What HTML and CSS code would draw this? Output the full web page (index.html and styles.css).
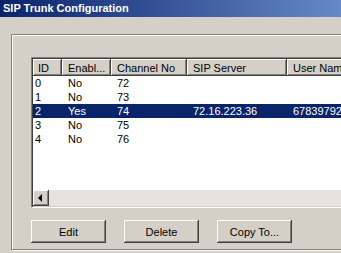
FILE: index.html
```html
<!DOCTYPE html>
<html lang="en">
<head>
  <meta charset="UTF-8" />
  <title>SIP Trunk Configuration</title>
  <link rel="stylesheet" href="styles.css">
</head>
<body>
  <div class="window">
    <div class="titlebar">SIP Trunk Configuration</div>
    <div class="client">
      <div class="group">
        <div class="listview">
          <table class="grid">
            <colgroup>
              <col class="c-id"><col class="c-en"><col class="c-ch"><col class="c-srv"><col class="c-user">
            </colgroup>
            <thead>
              <tr>
                <th class="first">ID</th>
                <th>Enabl...</th>
                <th>Channel No</th>
                <th>SIP Server</th>
                <th>User Name</th>
              </tr>
            </thead>
            <tbody>
              <tr><td>0</td><td>No</td><td>72</td><td></td><td></td></tr>
              <tr><td>1</td><td>No</td><td>73</td><td></td><td></td></tr>
              <tr class="selected"><td>2</td><td>Yes</td><td>74</td><td>72.16.223.36</td><td>6783979245</td></tr>
              <tr><td>3</td><td>No</td><td>75</td><td></td><td></td></tr>
              <tr><td>4</td><td>No</td><td>76</td><td></td><td></td></tr>
            </tbody>
          </table>
          <div class="hscroll">
            <div class="arrow"><span class="tri"></span></div>
            <div class="track"></div>
          </div>
        </div>
        <div class="buttons">
          <button type="button">Edit</button>
          <button type="button">Delete</button>
          <button type="button">Copy To...</button>
        </div>
      </div>
    </div>
  </div>
</body>
</html>
```

FILE: styles.css
```css
body {
  margin: 0;
  background: #d4d0c8;
  font-family: "Liberation Sans", Arial, sans-serif;
  font-size: 11px;
  color: #000;
  overflow: hidden;
}
.window {
  width: 460px;
  height: 253px;
}
.titlebar {
  height: 17px;
  line-height: 17px;
  padding-left: 3px;
  color: #fff;
  font-weight: bold;
  background: linear-gradient(to right, #0a246a 0, #6688c8 341px, #7f9fd6 460px);
}
.client {
  padding: 17px 0 0 11px;
}
.group {
  width: 430px;
  border: 1px solid #808080;
  box-shadow: inset 1px 1px #fff, 1px 1px #fff;
  padding: 22px 0 6px 19px;
}
.listview {
  width: 400px;
  background: #fff;
  border-top: 1px solid #808080;
  border-left: 1px solid #808080;
  border-bottom: 1px solid #fff;
  border-right: 1px solid #fff;
  padding: 1px;
  box-shadow: inset 1px 1px #404040, inset -1px -1px #d4d0c8;
}
.grid {
  width: 396px;
  border-collapse: collapse;
  table-layout: fixed;
  height: 131px;
}
.c-id { width: 29px; }
.c-en { width: 49px; }
.c-ch { width: 76px; }
.c-srv { width: 100px; }
.c-user { width: 142px; }
.grid th {
  height: 17px;
  padding: 0 0 0 6px;
  text-align: left;
  font-weight: normal;
  background: #d4d0c8;
  box-shadow: inset -1px -1px #404040, inset 1px 1px #fff, inset -2px -2px #808080;
  white-space: nowrap;
  overflow: hidden;
}
.grid th.first {
  padding-left: 5px;
}
.grid td {
  height: 14px;
  line-height: 14px;
  padding: 0 0 0 6px;
  white-space: nowrap;
  overflow: hidden;
  vertical-align: top;
}
.grid td:first-child {
  padding-left: 2px;
}
.grid tbody tr:last-child td {
  height: 58px;
}
.grid tr.selected td {
  background: #0a246a;
  color: #fff;
}
.hscroll {
  display: flex;
  height: 16px;
}
.arrow {
  width: 16px;
  height: 16px;
  box-sizing: border-box;
  background: #d4d0c8;
  box-shadow: inset -1px -1px #404040, inset 1px 1px #fff, inset -2px -2px #808080;
  display: flex;
  align-items: center;
  justify-content: center;
}
.tri {
  width: 0;
  height: 0;
  border-top: 4px solid transparent;
  border-bottom: 4px solid transparent;
  border-right: 4px solid #000;
  margin-left: -2px;
}
.track {
  flex: 1;
  background: #e6e3de;
}
.buttons {
  display: flex;
  gap: 18px;
  margin-top: 12px;
}
button {
  width: 75px;
  height: 23px;
  padding: 0;
  border: none;
  background: #d4d0c8;
  font-family: inherit;
  font-size: 11px;
  color: #000;
  box-shadow: inset -1px -1px #404040, inset 1px 1px #fff, inset -2px -2px #808080;
}
```
